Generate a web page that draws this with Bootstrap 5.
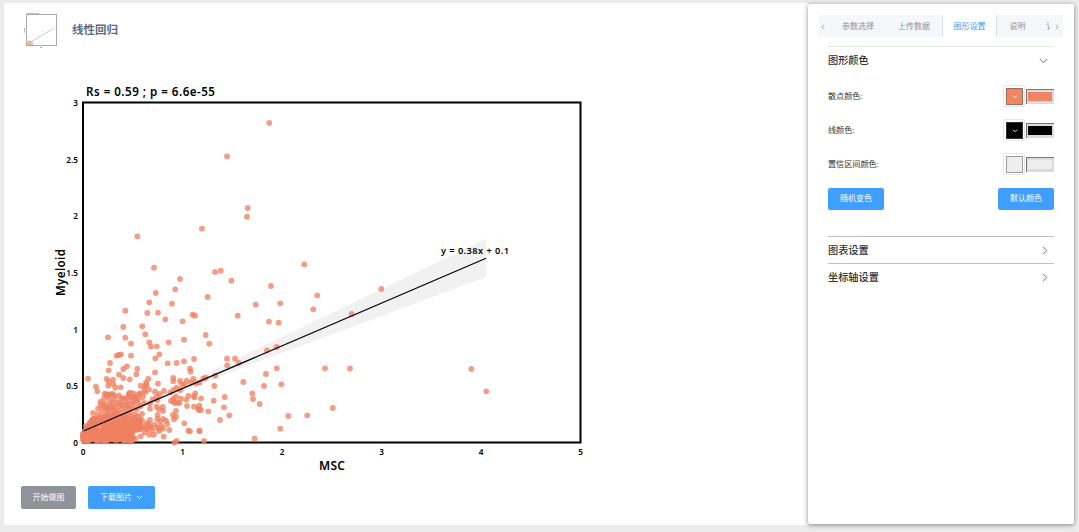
<!DOCTYPE html>
<html lang="zh-CN">
<head>
    <title>线性回归</title>
    <meta charset="utf-8">
    <meta name="viewport" content="width=device-width, initial-scale=1">
    <link href="https://cdn.jsdelivr.net/npm/bootstrap@5.3.1/dist/css/bootstrap.min.css" rel="stylesheet">
    <script src="https://cdn.jsdelivr.net/npm/bootstrap@5.3.1/dist/js/bootstrap.bundle.min.js"></script>
    <style>
        body {
            font-family: "Liberation Sans", "Noto Sans CJK SC", sans-serif;
            font-size: 8px;
            line-height: 12px;
            color: #303133;
            background: #ececec;
            height: 532px;
            overflow: hidden;
            padding: 3px 5px 7px 4px;
        }

        .plot-page {
            width: 804px;
            height: 522px;
        }

        .page-title {
            height: 53px;
            padding-left: 20px;
            gap: 14px;
        }

        .page-title h1 {
            font-size: 11.5px;
            line-height: 16px;
            color: #5e6d82;
        }

        .chart {
            height: 422px;
        }

        .chart text {
            font-family: "Noto Sans", "Open Sans", sans-serif;
            font-weight: 600;
            fill: #000;
        }

        .actions {
            padding: 8px 0 0 17px;
            gap: 12px;
        }

        .btn-tool {
            --bs-btn-font-size: 8px;
            --bs-btn-line-height: 12px;
            --bs-btn-padding-x: 0;
            --bs-btn-padding-y: 0;
            --bs-btn-border-radius: 2px;
            --bs-btn-border-width: 0;
            --bs-btn-color: #fff;
            --bs-btn-bg: #409eff;
            width: 56px;
            height: 22px;
        }

        .actions .btn-tool {
            width: 67px;
            height: 23px;
        }

        .actions .btn-start {
            --bs-btn-bg: #909399;
            width: 55px;
        }

        .settings {
            width: 266px;
            height: 520px;
            margin-top: 1px;
            padding: 11px 11px 0;
            border-radius: 2px;
            box-shadow: 0 1px 5px rgba(0, 0, 0, .45);
        }

        .tab-strip {
            height: 22px;
            background: #f5f7fa;
            color: #909399;
        }

        .tab-strip > div {
            padding-top: 2px;
        }

        .tab-strip .on {
            width: 55px;
            background: #fff;
            color: #409eff;
            border: solid #dcdfe6;
            border-width: 0 1px;
        }

        .tab-strip .wide { width: 56px; }
        .tab-strip .short { width: 41px; }
        .tab-strip .prev { width: 11px; padding-left: 2px; }

        .groups {
            margin: 9px 9px 0;
            font-size: 10.2px;
        }

        .group-head {
            height: 27px;
            border-top: 1px solid #bfc1c5;
            padding: 1px 6px 0 0;
            font-weight: 500;
        }

        .group-head.first {
            border-color: #e4e7ed;
        }

        .color-list {
            padding-top: 6px;
        }

        .color-row {
            height: 34px;
            font-size: 8.1px;
        }

        .color-row > span {
            padding-top: 2px;
        }

        .picker {
            width: 22px;
            height: 22px;
            border: 1px solid #e6e6e6;
            border-radius: 2px;
            padding: 2px;
            margin-right: 1px;
        }

        .picker span {
            width: 17px;
            height: 17px;
            border: 1px solid rgba(90, 90, 90, .55);
        }

        .swatch {
            width: 28px;
            height: 15px;
            border: 1px solid #767676;
            border-width: 1px 0 0 1px;
            background: #dcdcdc;
            padding: 2px 2px 3px 1px;
        }

        .c-dot { background: #f08563; }
        .c-line { background: #000; }
        .c-band { background: #eee; }

        .group-foot {
            padding: 7px 0 26px;
        }
    </style>
</head>
<body class="d-flex">
    <main class="plot-page bg-white flex-shrink-0">
        <div class="page-title d-flex align-items-center">
            <svg width="34" height="38" viewBox="0 0 34 38">
                <rect x="2.5" y="3.5" width="30" height="31" fill="none" stroke="#aaa"/>
                <path d="M3 2.5h12M.5 17v5M16 36.5h2" stroke="#aaa" stroke-dasharray="2 .6"/>
                <path d="M4 33L30 17" stroke="#bbb" stroke-width=".8"/>
                <path d="M2.500 34v-3l3-2 3 2 1 3z" fill="#f4b59d"/>
                <path d="M10 29h1M13 25h1M8 24h1M15 31h1M18 20h1" stroke="#f6d0c2"/>
            </svg>
            <h1 class="mb-0 fw-bold">线性回归</h1>
        </div>

        <svg class="chart d-block" width="804" height="422" viewBox="4 56 804 422">
            <path d="M84 427L130 409L180 386L257 349L390 285L486 239V277L390 313L257 362L180 393L130 414L84 435z" fill="#f1f1f1"/>
            <rect x="83" y="102.500" width="497.500" height="340" fill="none" stroke="#000" stroke-width="2"/>
            <g id="dots" fill="#ee8262" fill-opacity=".78"></g>
            <path d="M83.500 431L486 258.300" stroke="#000" stroke-width="1.200"/>
            <text x="86" y="96" font-size="11.600" textLength="129">Rs = 0.59 ; p = 6.6e-55</text>
            <text x="441" y="254" font-size="9.200" textLength="68">y = 0.38x + 0.1</text>
            <text x="319" y="470" font-size="12" textLength="26">MSC</text>
            <text transform="translate(64.500 296) rotate(-90)" font-size="11.600" textLength="47">Myeloid</text>
            <g id="ticks" font-size="8.200"></g>
        </svg>

        <div class="actions d-flex">
            <button type="button" class="btn btn-tool btn-start">开始做图</button>
            <button type="button" class="btn btn-tool d-flex align-items-center justify-content-center gap-1">下载图片
                <svg width="7" height="5" viewBox="0 0 7 5"><path d="M1 1l2.500 2.500L6 1" fill="none" stroke="#fff"/></svg>
            </button>
        </div>
    </main>

    <aside class="settings bg-white flex-shrink-0">
        <div class="tab-strip d-flex align-items-stretch">
            <div class="prev d-flex align-items-center">
                <svg width="4" height="6" viewBox="0 0 4 6"><path d="M3 .8L1 3l2 2.200" fill="none" stroke="#909399" stroke-width=".8"/></svg>
            </div>
            <div class="wide d-flex align-items-center justify-content-center">参数选择</div>
            <div class="wide d-flex align-items-center justify-content-center">上传数据</div>
            <div class="on d-flex align-items-center justify-content-center">图形设置</div>
            <div class="short d-flex align-items-center justify-content-center">说明</div>
            <div class="d-flex align-items-center ps-2">讠</div>
            <div class="d-flex align-items-center ms-auto pe-1">
                <svg width="4" height="6" viewBox="0 0 4 6"><path d="M1 .8L3 3L1 5.200" fill="none" stroke="#909399" stroke-width=".8"/></svg>
            </div>
        </div>

        <div class="groups">
            <div class="group-head first d-flex align-items-center justify-content-between">图形颜色
                <svg width="9" height="6" viewBox="0 0 9 6"><path d="M.8 1l3.700 3.700L8.200 1" fill="none" stroke="#606266" stroke-width=".9"/></svg>
            </div>
            <div class="color-list">
                <div class="color-row d-flex align-items-center">
                    <span class="me-auto">散点颜色:</span>
                    <div class="picker"><span class="c-dot d-flex align-items-center justify-content-center"><svg width="6" height="4" viewBox="0 0 6 4"><path d="M1 .7l2 2 2-2" fill="none" stroke="#fff" stroke-width=".9"/></svg></span></div>
                    <div class="swatch"><div class="c-dot h-100"></div></div>
                </div>
                <div class="color-row d-flex align-items-center">
                    <span class="me-auto">线颜色:</span>
                    <div class="picker"><span class="c-line d-flex align-items-center justify-content-center"><svg width="6" height="4" viewBox="0 0 6 4"><path d="M1 .7l2 2 2-2" fill="none" stroke="#fff" stroke-width=".9"/></svg></span></div>
                    <div class="swatch"><div class="c-line h-100"></div></div>
                </div>
                <div class="color-row d-flex align-items-center">
                    <span class="me-auto">置信区间颜色:</span>
                    <div class="picker"><span class="c-band d-flex align-items-center justify-content-center"><svg width="6" height="4" viewBox="0 0 6 4"><path d="M1 .7l2 2 2-2" fill="none" stroke="#fff" stroke-width=".9"/></svg></span></div>
                    <div class="swatch"><div class="c-band h-100"></div></div>
                </div>
            </div>
            <div class="group-foot d-flex justify-content-between">
                <button type="button" class="btn btn-tool">随机变色</button>
                <button type="button" class="btn btn-tool">默认颜色</button>
            </div>
            <div class="group-head d-flex align-items-center justify-content-between">图表设置
                <svg width="6" height="9" viewBox="0 0 6 9"><path d="M1 .8l3.700 3.700L1 8.200" fill="none" stroke="#606266" stroke-width=".9"/></svg>
            </div>
            <div class="group-head d-flex align-items-center justify-content-between">坐标轴设置
                <svg width="6" height="9" viewBox="0 0 6 9"><path d="M1 .8l3.700 3.700L1 8.200" fill="none" stroke="#606266" stroke-width=".9"/></svg>
            </div>
        </div>
    </aside>

    <script>
        const ns = "http://www.w3.org/2000/svg";
        const dots = document.getElementById("dots");
        const ticks = document.getElementById("ticks");

        function addDot(x, y) {
            const c = document.createElementNS(ns, "circle");
            c.setAttribute("cx", x);
            c.setAttribute("cy", y);
            c.setAttribute("r", 2.9);
            dots.appendChild(c);
        }

        function addTick(x, y, anchor, label) {
            const t = document.createElementNS(ns, "text");
            t.setAttribute("x", x);
            t.setAttribute("y", y);
            t.setAttribute("text-anchor", anchor);
            t.textContent = label;
            ticks.appendChild(t);
        }

        for (let i = 0; i <= 5; i++) addTick(83 + i * 99.5, 455, "middle", i);
        for (let i = 0; i <= 6; i++) addTick(78, 446 - i * 56.7, "end", i / 2);

        // upper part of the cloud
        const sparse = [
            [269.3,123],[227,156.3],[247.7,208],[247,216.7],[202,228.7],[137.3,236.3],[154,267.7],[180,279],
            [155.7,293],[175.3,289.3],[149.3,302.3],[172,303.7],[125.3,310.7],[147.3,313],[158,312.7],
            [165.3,319.3],[192.7,314.7],[195,315.7],[182.7,321.3],[123.3,327],[142.3,326.3],[108,337.3],
            [125.3,337.7],[145.3,334.3],[131,343.7],[149.3,342.3],[151,346.7],[156.7,346.3],[168.7,342.3],
            [184,339.7],[215,272],[220.7,270.7],[231.3,280.7],[207.7,297],[304.3,264.3],[271,286],
            [317.3,295.3],[255.7,304.7],[280.3,303.3],[313.3,309.3],[237.7,315.7],[269,321.7],[278.7,322.7],
            [351.7,314],[381.3,289],[471.3,369],[486.3,391.3],[350,368.5],[205.7,335],[209.3,343.7],
            [194,359],[227,358.7],[235,358.7],[227.3,365.3],[238.7,363],[215.3,375.7],[193.3,379],[196,383.3],
            [203.3,378.7],[205.7,377.7],[214.3,386],[243.3,382],[267,350.3],[276.7,347],[276.7,368.3],
            [266,374],[264,386],[281.3,384.3],[325,368.3],[332.7,408],[252.3,393.3],[253,399],[259.7,404],
            [224.7,397],[213.7,400.7],[224,407.3],[229.3,415.3],[220,420],[208.3,411.3],[201,410],[198.3,408.7],
            [199.3,405.7],[194.3,397.3],[195.3,393.3],[201,398.3],[199.7,431],[204,441],[254.7,438.7],
            [288.3,416],[307.3,415.3],[280.3,428.7]
        ];

        // lower left corner, on a grid three times finer that starts at 70, 340
        const corner = [
            [147,45],[140,47],[153,43],[183,47],[120,69],[116,91],[171,79],[160,87],[202,87],[199,103],
            [147,104],[160,114],[179,118],[54,116],[110,117],[129,119],[268,43],[256,55],[293,70],[320,69],
            [342,64],[255,97],[235,117],[360,86],[362,95],[78,140],[82,154],[102,175],[117,125],[115,137],
            [130,133],[136,143],[152,142],[228,128],[212,137],[225,139],[264,131],[310,114],[310,124],
            [330,123],[350,122],[336,133],[344,133],[362,127],[388,128],[311,149],[320,143],[331,150],
            [301,157],[318,170],[282,153],[269,162],[255,155],[237,149],[226,157],[372,168],[355,168],
            [349,179],[311,184],[315,190],[323,187],[333,176],[303,183],[260,170],[248,178],[262,180],
            [240,190],[190,160],[176,162],[183,172],[196,170],[206,162],[172,183],[165,175],[201,181],
            [187,186],[219,171],[222,189],[351,198],[372,200],[387,210],[318,213],[309,225],[318,230],
            [312,238],[278,201],[260,200],[267,208],[279,213],[240,206],[263,225],[262,237],[279,237],
            [240,240],[216,222],[343,250],[355,272],[360,274],[388,273],[298,270],[292,252],[280,266],
            [267,273],[268,266],[247,271],[243,262],[320,303],[313,308],[281,290],[196,296],[252,284],
            [234,267],[228,255],[117,163],[110,163],[123,163],[118,178],[107,192],[120,195],[127,186],
            [134,178],[84,206],[97,207],[109,209],[122,209],[133,203],[147,199],[148,187],[160,194],
            [172,198],[69,219],[83,224],[96,222],[48,258],[60,247],[70,240],[188,203],[201,206],[212,198],
            [180,217],[196,222],[166,221],[208,238],[228,268],[219,262],[154,193],[160,176],[99,192],[204,190],
            [104,161],[112,167],[128,162],[134,167],[175,170],[190,171],[180,158],[196,176],[211,160],
            [222,150],[230,135],[172,192],[190,190],[206,175],[147,166],[153,175],[92,195],[91,186],
            [104,202],[114,202],[128,198],[140,191],[116,212],[132,213],[142,212],[156,207],[168,209],
            [178,202],[152,221],[176,227],[188,230],[205,230],[216,240],[232,249],[240,255],[224,278],
            [238,284],[212,289],[254,254],[262,262],[274,258],[288,242],[270,244],[310,177],[328,190]
        ];

        sparse.forEach(p => addDot(p[0], p[1]));
        corner.forEach(p => addDot(70 + p[0] / 3, 340 + p[1] / 3));

        // dense mass of points near the origin
        let seed = 17;
        function rnd() {
            seed = (seed * 16807) % 2147483647;
            return seed / 2147483647;
        }
        const edge = x => x < 92 ? 434 - (x - 83) * 1.7 : x < 114 ? 419 - (x - 92) * 0.3 : 412 + (x - 114) * 0.35;
        for (let i = 0; i < 460; i++) {
            const x = 83 + Math.pow(rnd(), 1.15) * 58;
            const low = x < 134 ? 441 : 430;
            addDot(x, edge(x) + rnd() * (low - edge(x)));
        }
    </script>
</body>
</html>
